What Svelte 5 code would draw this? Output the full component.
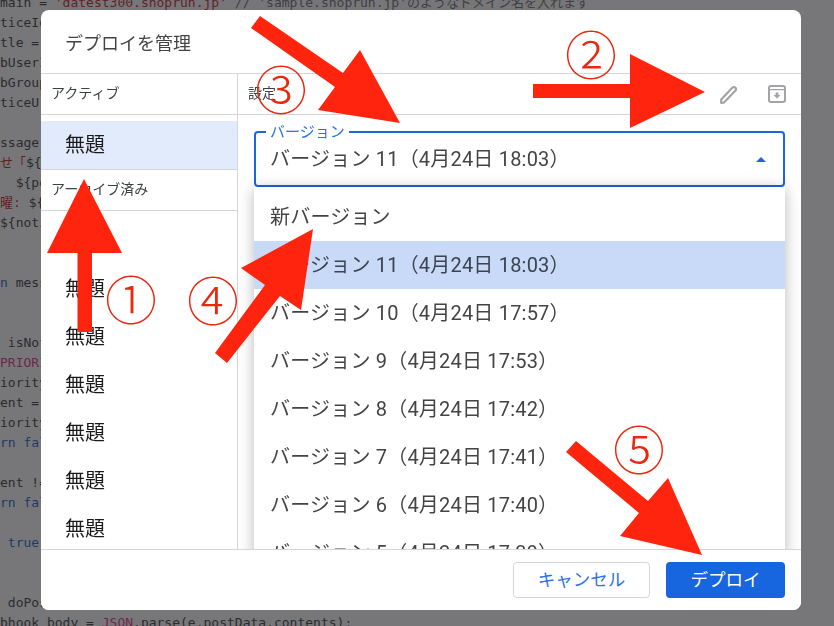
<script>
	// code editor that sits behind the dialog
	const code = [
		["main = ", ["str", "'datest300.shoprun.jp'"], " ", ["note", "// 'sample.shoprun.jp'のようなドメイン名を入れます"]],
		["ticeId = "],
		["tle = "],
		["bUserId = "],
		["bGroupId = "],
		["ticeUrl = "],
		[""],
		["ssage = "],
		[["str", "せ「"], "${title"],
		["  ${post}"],
		[["str", "曜:"], " ${date}"],
		["${notice}"],
		[""],
		[""],
		[["kw", "n"], " message"],
		[""],
		[""],
		[" isNotice"],
		[["pink", "PRIORITY"]],
		["iority"],
		["ent = "],
		["iority"],
		[["kw", "rn false"]],
		[""],
		["ent !="],
		[["kw", "rn false"]],
		[""],
		[" ", ["kw", "true"]],
		[""],
		[""],
		[" doPost(e)"],
		["bhook_body = ", ["pink", "JSON"], ".parse(e.postData.contents);"]
	];

	const archived = ["無題", "無題", "無題", "無題", "無題", "無題", "無題"];

	const versions = [
		"新バージョン",
		"バージョン 11（4月24日 18:03）",
		"バージョン 10（4月24日 17:57）",
		"バージョン 9（4月24日 17:53）",
		"バージョン 8（4月24日 17:42）",
		"バージョン 7（4月24日 17:41）",
		"バージョン 6（4月24日 17:40）",
		"バージョン 5（4月24日 17:39）"
	];
	let current = 1;

	// red annotations drawn on top of the screenshot
	const arrows = [
		"84,179 122,253 92,253 92,332 77.5,332 77.5,253 47,253",
		"533,84 630,84 630,54 705,92 630,128 630,98 533,98",
		"260,16 343,73 360,50 400,123 318,110 335,87 251,28",
		"313,229 301,310 280,296 227,363 215,353 265,285 241,268",
		"576,441 648,501 668,478 702,555 620,536 639,513 566,452"
	];
	const marks = [
		{ n: "①", x: 131, y: 301 },
		{ n: "②", x: 591, y: 56 },
		{ n: "③", x: 281, y: 91 },
		{ n: "④", x: 213, y: 302 },
		{ n: "⑤", x: 639, y: 451 }
	];
</script>

<pre class="code">{#each code as line}<div class="line">{#each line as part}{#if typeof part === "string"}{part}{:else}<span class={part[0]}>{part[1]}</span>{/if}{/each}</div>{/each}</pre>

<div class="backdrop">
	<div class="dialog">
		<header class="title">デプロイを管理</header>

		<div class="body">
			<aside class="side">
				<div class="subhead">アクティブ</div>
				<ul class="deploys">
					<li class="selected">無題</li>
				</ul>
				<div class="subhead archived">アーカイブ済み</div>
				<ul class="deploys">
					{#each archived as name}
						<li>{name}</li>
					{/each}
				</ul>
			</aside>

			<section class="main">
				<div class="subhead settings">
					<span>設定</span>
					<div class="tools">
						<svg width="18" height="19" viewBox="0 0 18 19" fill="none" stroke="#a3a4a7" stroke-width="2.2" stroke-linejoin="round">
							<path d="M1.2 14.5 L12.6 2.6 a1.8 1.8 0 0 1 2.6 0 l0.3 0.3 a1.8 1.8 0 0 1 0 2.6 L4 17.6 L1.2 17.8 Z" />
						</svg>
						<svg width="18" height="18" viewBox="0 0 18 18" fill="none" stroke="#a3a4a7" stroke-width="2">
							<rect x="1" y="1" width="16" height="16" rx="2" />
							<path d="M1 4.6 H17" stroke-width="1.4" />
							<path d="M7.6 7.4 H10.4 V10 H12.6 L9 13.6 L5.4 10 H7.6 Z" fill="#a3a4a7" stroke="none" />
						</svg>
					</div>
				</div>

				<div class="form">
					<div class="select">
						<span class="label">バージョン</span>
						<span class="value">{versions[current]}</span>
						<span class="caret"></span>
						<ul class="menu">
							{#each versions as v, i}
								<li class:current={i === current}>{v}</li>
							{/each}
						</ul>
					</div>
				</div>
			</section>
		</div>

		<footer class="actions">
			<button class="cancel">キャンセル</button>
			<button class="deploy">デプロイ</button>
		</footer>
	</div>
</div>

<svg class="arrows" width="834" height="626" viewBox="0 0 834 626">
	{#each arrows as pts}
		<polygon points={pts} fill="#ff240e" />
	{/each}
</svg>
{#each marks as m}
	<span class="mark" style="left:{m.x}px;top:{m.y}px">{m.n}</span>
{/each}

<style>
	:global(body) {
		overflow: hidden;
		background: #fff;
		font-family: Roboto, "Noto Sans CJK JP", sans-serif;
	}
	.code {
		margin: -7px 0 0;
		height: 633px;
		overflow: hidden;
		font-family: "DejaVu Sans Mono", "Noto Sans CJK JP", monospace;
		font-size: 13px;
		line-height: 20px;
		color: #3a3b3e;
	}
	.line {
		height: 20px;
		white-space: pre;
	}
	.str { color: #c71f1f; }
	.kw { color: #1e61cd; }
	.pink { color: #e8358a; }
	.note { color: #707070; }

	.backdrop {
		position: fixed;
		inset: 0;
		display: flex;
		padding: 10px 33px 16px 41px;
		background: rgba(32, 33, 36, 0.61);
	}
	.dialog {
		flex: 1;
		display: flex;
		flex-direction: column;
		background: #fff;
		border-radius: 8px;
		overflow: hidden;
	}
	.title {
		height: 64px;
		flex: none;
		box-sizing: border-box;
		padding-left: 24px;
		display: flex;
		align-items: center;
		font-size: 18px;
		color: #444;
		border-bottom: 1px solid #d5d6dc;
	}
	.body {
		flex: 1;
		min-height: 0;
		display: flex;
		overflow: hidden;
	}
	.side {
		width: 197px;
		flex: none;
		box-sizing: border-box;
		border-right: 1px solid #d5d6dc;
	}
	.subhead {
		height: 41px;
		box-sizing: border-box;
		padding: 0 0 4px 10px;
		display: flex;
		align-items: center;
		font-size: 14px;
		color: #3c4043;
		border-bottom: 1px solid #d5d6dc;
	}
	.archived {
		height: 42px;
		border-top: 1px solid #d5d6dc;
	}
	.deploys {
		list-style: none;
		margin: 0;
		padding: 6px 0 0;
	}
	.deploys li {
		height: 48px;
		box-sizing: border-box;
		padding: 0 0 3px 24px;
		display: flex;
		align-items: center;
		font-size: 20px;
		color: #1a1a1a;
	}
	.deploys li.selected {
		background: #e2ebfb;
	}
	.main {
		flex: 1;
		min-width: 0;
	}
	.settings {
		justify-content: space-between;
		padding-right: 15px;
	}
	.tools {
		display: flex;
		align-items: center;
		gap: 30px;
		padding-top: 4px;
	}
	.form {
		padding: 16px 16px 0;
	}
	.select {
		position: relative;
		height: 56px;
		box-sizing: border-box;
		border: 2px solid #1a66e0;
		border-radius: 4px;
		padding: 0 14px 3px;
		display: flex;
		align-items: center;
		font-size: 20px;
		letter-spacing: 0.2px;
		color: #444;
	}
	.label {
		position: absolute;
		left: 10px;
		top: -9px;
		padding: 0 4px;
		background: #fff;
		font-size: 15px;
		line-height: 16px;
		letter-spacing: 0;
		color: #2a72e6;
	}
	.caret {
		position: absolute;
		right: 17px;
		top: 24px;
		border-left: 5px solid transparent;
		border-right: 5px solid transparent;
		border-bottom: 5px solid #1a66e0;
	}
	.menu {
		position: absolute;
		left: -2px;
		right: -2px;
		top: 54px;
		list-style: none;
		margin: 0;
		padding: 6px 0;
		background: #fff;
		box-shadow: 0 2px 14px rgba(0, 0, 0, 0.28);
	}
	.menu li {
		height: 48px;
		box-sizing: border-box;
		padding: 0 0 3px 16px;
		display: flex;
		align-items: center;
	}
	.menu li.current {
		background: #c8daf7;
		color: #3b4350;
	}
	.actions {
		height: 61px;
		flex: none;
		box-sizing: border-box;
		border-top: 1px solid #d5d6dc;
		background: #fff;
		display: flex;
		justify-content: flex-end;
		align-items: center;
		gap: 16px;
		padding: 0 16px;
	}
	button {
		height: 36px;
		border-radius: 4px;
		font: inherit;
		font-size: 17.5px;
		padding: 0 0 3px;
	}
	.cancel {
		width: 137px;
		background: #fff;
		border: 1px solid #d5d6dc;
		color: #2a72e6;
	}
	.deploy {
		width: 119px;
		background: #1766e0;
		border: none;
		color: #fff;
	}
	.arrows {
		position: fixed;
		left: 0;
		top: 0;
		pointer-events: none;
	}
	.mark {
		position: fixed;
		transform: translate(-50%, -56%);
		font-family: "Noto Sans CJK JP", sans-serif;
		font-size: 52px;
		font-weight: 200;
		line-height: 1;
		color: #e8280f;
	}
</style>
